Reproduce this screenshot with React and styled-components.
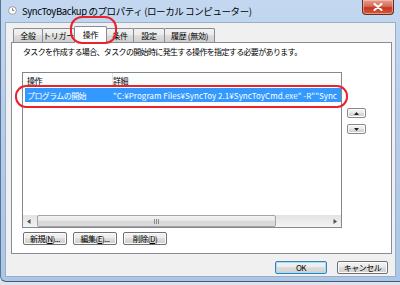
import React from "react";
import styled, { createGlobalStyle, css } from "styled-components";

const GlobalStyle = createGlobalStyle`
  html, body {
    margin: 0;
    padding: 0;
    background: #dce4ec;
  }
  body {
    font-family: "Noto Sans CJK JP", "Noto Sans", sans-serif;
    font-size: 8px;
    color: #000;
  }
  * {
    box-sizing: border-box;
  }
`;

const tabs = ["全般", "トリガー", "操作", "条件", "設定", "履歴 (無効)"];
const tabWidths = [30, 33, 33, 28, 32, 51];

const App = () => {
  return (
    <>
      <GlobalStyle />
      <Window>
        <TitleBar>
          <AppIcon viewBox="0 0 10 10">
            <circle cx="5" cy="5" r="4.3" fill="#fdfdfd" stroke="#8c8c8c" strokeWidth="0.9" />
            <path d="M5 2.4V5h2" stroke="#555" strokeWidth="0.8" fill="none" />
          </AppIcon>
          <Title>SyncToyBackup のプロパティ (ローカル コンピューター)</Title>
          <CloseButton>
            <svg width="10" height="8" viewBox="0 0 10 8">
              <path d="M1.5 1l7 6M8.5 1l-7 6" stroke="#fff" strokeWidth="2" strokeLinecap="round" />
            </svg>
          </CloseButton>
        </TitleBar>

        <Body>
          <TabStrip>
            {tabs.map((t, i) => (
              <Tab key={t} $selected={i === 2} $w={tabWidths[i]}>
                {t}
              </Tab>
            ))}
          </TabStrip>

          <Panel>
            <Hint>タスクを作成する場合、タスクの開始時に発生する操作を指定する必要があります。</Hint>

            <ListArea>
              <ListView>
                <ListHeader>
                  <HeaderCell $first>操作</HeaderCell>
                  <HeaderCell>詳細</HeaderCell>
                </ListHeader>
                <Rows>
                  <Row $selected>
                    <Cell $first>プログラムの開始</Cell>
                    <PathCell>"C:¥Program Files¥SyncToy 2.1¥SyncToyCmd.exe" -R""Sync</PathCell>
                  </Row>
                </Rows>
                <HScroll>
                  <ScrollArrow>
                    <svg width="4" height="5" viewBox="0 0 4 5">
                      <path d="M3.5 0v5L0 2.5z" fill="#4d4d4d" />
                    </svg>
                  </ScrollArrow>
                  <Track>
                    <Thumb>
                      <Grip />
                    </Thumb>
                  </Track>
                  <ScrollArrow>
                    <svg width="4" height="5" viewBox="0 0 4 5">
                      <path d="M0.5 0v5L4 2.5z" fill="#4d4d4d" />
                    </svg>
                  </ScrollArrow>
                </HScroll>
              </ListView>

              <MoveButtons>
                <SmallButton>
                  <svg width="5" height="3" viewBox="0 0 5 3">
                    <path d="M0 3h5L2.5 0z" fill="#222" />
                  </svg>
                </SmallButton>
                <SmallButton>
                  <svg width="5" height="3" viewBox="0 0 5 3">
                    <path d="M0 0h5L2.5 3z" fill="#222" />
                  </svg>
                </SmallButton>
              </MoveButtons>
            </ListArea>

            <ActionRow>
              <Button $w={44}>新規(<u>N</u>)...</Button>
              <Button $w={44}>編集(<u>E</u>)...</Button>
              <Button $w={44}>削除(<u>D</u>)</Button>
            </ActionRow>
          </Panel>

          <Footer>
            <Button $w={52} $default>OK</Button>
            <Button $w={51}>キャンセル</Button>
          </Footer>
        </Body>

        <Marker $left={69} $top={16} $width={47} $height={28} $radius={12} />
        <Marker $left={14} $top={85} $width={333} $height={23} $radius={11} />
      </Window>
    </>
  );
};

export default App;

const winGradient = css`
  background: linear-gradient(
    to bottom,
    #f2f2f2 0%,
    #ebebeb 49%,
    #dddddd 50%,
    #cfcfcf 100%
  );
`;

const Window = styled.div`
  position: relative;
  width: 400px;
  height: 282px;
  display: flex;
  flex-direction: column;
  padding: 0 4px 4px 4px;
  background: linear-gradient(to bottom, #c3d8f0 0%, #b6cdea 40%, #adc6e6 100%);
  border-left: 1px solid #5a7394;
  border-bottom: 1px solid #40597a;
  border-bottom-left-radius: 6px;
  overflow: hidden;
`;

const TitleBar = styled.div`
  height: 22px;
  display: flex;
  align-items: center;
  padding-left: 3px;
  margin-right: 2px;
`;

const AppIcon = styled.svg`
  width: 9px;
  height: 9px;
  margin-top: -1px;
  flex-shrink: 0;
`;

const Title = styled.div`
  margin-left: 5px;
  font-size: 9.5px;
  letter-spacing: -0.4px;
  color: #000;
  white-space: nowrap;
  margin-top: -1px;
`;

const CloseButton = styled.div`
  margin-left: auto;
  align-self: flex-start;
  width: 32px;
  height: 15px;
  display: flex;
  align-items: center;
  justify-content: center;
  background: linear-gradient(to bottom, #e5a091 0%, #d66a55 45%, #c4381f 55%, #d5583d 100%);
  border: 1px solid #6d2b22;
  border-top: none;
  border-radius: 0 0 4px 4px;
  box-shadow: inset 0 0 0 1px rgba(255, 210, 200, 0.5);
`;

const Body = styled.div`
  flex: 1;
  display: flex;
  flex-direction: column;
  background: #f0f0f0;
  border: 1px solid #98aecb;
  padding: 3px 3px 2px 5px;
`;

const TabStrip = styled.div`
  height: 16px;
  display: flex;
  align-items: flex-end;
  padding-left: 2px;
`;

const Tab = styled.div`
  position: relative;
  width: ${(p) => p.$w}px;
  height: ${(p) => (p.$selected ? 17 : 14)}px;
  margin-right: -1px;
  margin-bottom: ${(p) => (p.$selected ? -1 : 0)}px;
  display: flex;
  align-items: center;
  justify-content: center;
  padding-bottom: ${(p) => (p.$selected ? 2 : 0)}px;
  border: 1px solid #898c95;
  border-bottom: none;
  border-radius: 2px 2px 0 0;
  letter-spacing: -0.3px;
  white-space: nowrap;
  z-index: ${(p) => (p.$selected ? 2 : 1)};
  ${(p) =>
    p.$selected
      ? css`
          background: #fff;
        `
      : winGradient}
`;

const Panel = styled.div`
  height: 212px;
  display: flex;
  flex-direction: column;
  background: #fff;
  border: 1px solid #898c95;
  padding: 4px 0 0 10px;
`;

const Hint = styled.div`
  height: 10px;
  line-height: 10px;
  padding-left: 1px;
  letter-spacing: -0.65px;
  white-space: nowrap;
`;

const ListArea = styled.div`
  display: flex;
  gap: 5px;
  margin-top: 15px;
`;

const ListView = styled.div`
  width: 320px;
  height: 156px;
  display: flex;
  flex-direction: column;
  border: 1px solid #828790;
  background: #fff;
`;

const ListHeader = styled.div`
  height: 14px;
  display: flex;
  align-items: center;
  padding-left: 4px;
  background: linear-gradient(to bottom, #ffffff 0%, #f7f8f9 100%);
`;

const HeaderCell = styled.div`
  height: 100%;
  display: flex;
  align-items: center;
  letter-spacing: -0.5px;
  ${(p) =>
    p.$first &&
    css`
      width: 86px;
      border-right: 1px solid #e5e5e5;
    `}
`;

const Rows = styled.div`
  flex: 1;
  padding-top: 1px;
`;

const Row = styled.div`
  height: 14px;
  margin-left: 2px;
  padding-left: 2px;
  display: flex;
  align-items: center;
  white-space: nowrap;
  background: ${(p) => (p.$selected ? "#3399ff" : "transparent")};
  color: ${(p) => (p.$selected ? "#fff" : "#000")};
`;

const Cell = styled.div`
  letter-spacing: -0.6px;
  ${(p) =>
    p.$first &&
    css`
      width: 86px;
      flex-shrink: 0;
    `}
`;

const PathCell = styled.div`
  letter-spacing: 0.05px;
  white-space: nowrap;
`;

const HScroll = styled.div`
  height: 12px;
  display: flex;
  align-items: stretch;
  background: linear-gradient(to bottom, #e3e3e3 0%, #f3f3f3 100%);
`;

const ScrollArrow = styled.div`
  width: 12px;
  display: flex;
  align-items: center;
  justify-content: center;
`;

const Track = styled.div`
  flex: 1;
  padding: 0 53px 0 2px;
  display: flex;
`;

const Thumb = styled.div`
  flex: 1;
  display: flex;
  align-items: center;
  justify-content: center;
  border: 1px solid #a3a3a3;
  border-radius: 2px;
  background: linear-gradient(to bottom, #f3f3f3 0%, #e6e6e6 50%, #d7d7d7 51%, #dcdcdc 100%);
`;

const Grip = styled.div`
  width: 5px;
  height: 5px;
  background: repeating-linear-gradient(
    to right,
    #8a8a8a 0px,
    #8a8a8a 1px,
    transparent 1px,
    transparent 2px
  );
`;

const MoveButtons = styled.div`
  display: flex;
  flex-direction: column;
  gap: 6px;
  padding-top: 36px;
`;

const SmallButton = styled.div`
  width: 19px;
  height: 10px;
  display: flex;
  align-items: center;
  justify-content: center;
  border: 1px solid #8a8a8a;
  border-radius: 2px;
  ${winGradient}
  box-shadow: inset 0 0 0 1px #fbfbfb;
`;

const ActionRow = styled.div`
  display: flex;
  gap: 6px;
  margin-top: 4px;
  padding-left: 1px;
`;

const Button = styled.div`
  width: ${(p) => p.$w}px;
  height: 13px;
  display: flex;
  align-items: center;
  justify-content: center;
  border: 1px solid ${(p) => (p.$default ? "#3c7fb1" : "#707070")};
  border-radius: 2px;
  ${winGradient}
  box-shadow: inset 0 0 0 1px ${(p) => (p.$default ? "#9ee0fb" : "#fbfbfb")};
  letter-spacing: -0.5px;
  white-space: nowrap;

  u {
    text-underline-offset: 1px;
  }
`;

const Footer = styled.div`
  display: flex;
  justify-content: flex-end;
  gap: 10px;
  margin-top: 7px;
  padding-right: 4px;
`;

const Marker = styled.div`
  position: absolute;
  left: ${(p) => p.$left}px;
  top: ${(p) => p.$top}px;
  width: ${(p) => p.$width}px;
  height: ${(p) => p.$height}px;
  border: 2px solid #e8232b;
  border-radius: ${(p) => p.$radius}px;
  pointer-events: none;
  z-index: 5;
`;
